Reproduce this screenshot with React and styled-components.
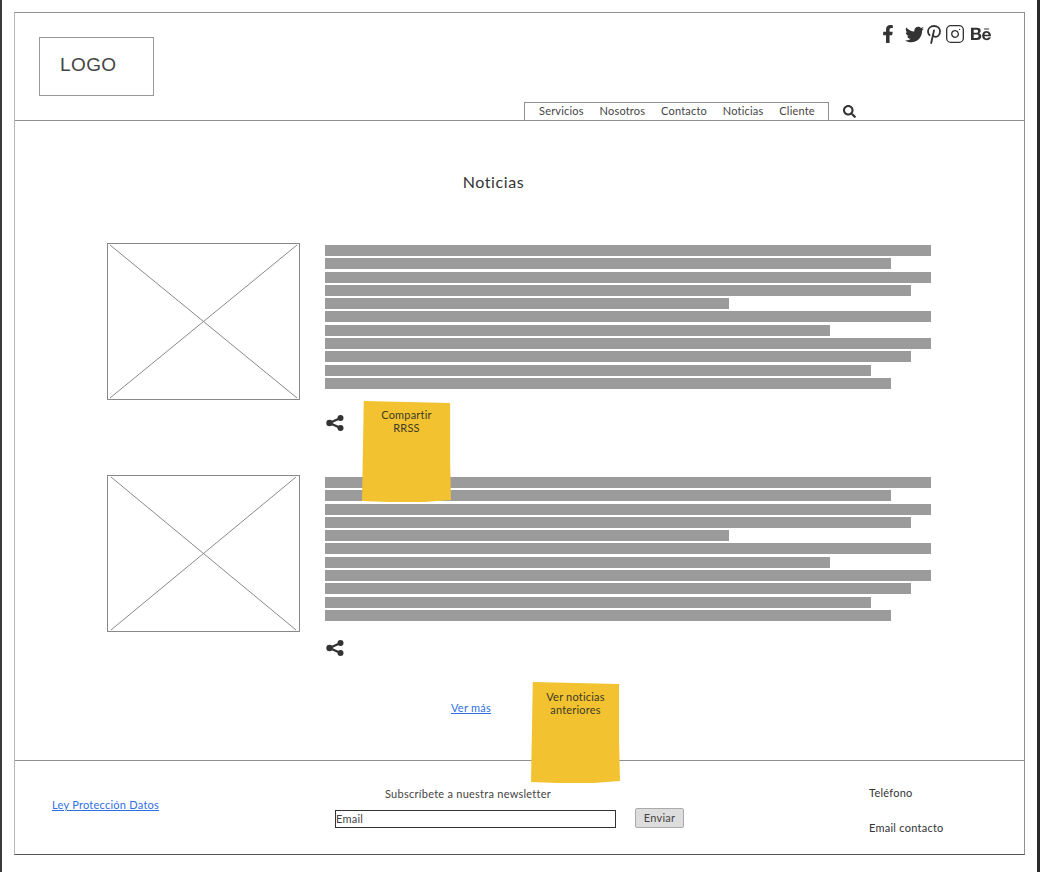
import React from 'react'
import styled, { createGlobalStyle } from 'styled-components'
import { FaFacebookF, FaTwitter, FaBehance, FaSearch } from 'react-icons/fa'
import { Instagram } from 'lucide-react'

const GlobalStyle = createGlobalStyle`
  html, body {
    margin: 0;
    background: #fff;
  }
  * {
    box-sizing: border-box;
  }
`

const Page = styled.div`
  width: 1040px;
  height: 872px;
  padding: 12px 12px 17px;
  border-left: 2px solid #3a3a3a;
  border-right: 3px solid #2a2a2a;
  background: #fff;
  color: #333;
  font-family: Lato, "Open Sans", sans-serif;
  overflow: hidden;
`

const Frame = styled.div`
  display: flex;
  flex-direction: column;
  height: 100%;
  border: 1px solid #8f8f8f;
  border-left: 1px solid #b5b5b5;
  border-bottom-color: #555;
`

const Header = styled.header`
  display: flex;
  justify-content: space-between;
  height: 108px;
  flex-shrink: 0;
  border-bottom: 1px solid #8f8f8f;
`

const Logo = styled.div`
  width: 115px;
  height: 59px;
  margin: 24px 0 0 24px;
  padding: 14px 0 0 20px;
  border: 1px solid #999;
  font-family: "Liberation Sans", sans-serif;
  font-size: 19px;
  line-height: 26px;
  letter-spacing: 0.4px;
  color: #444;
`

const HeaderRight = styled.div`
  display: flex;
  flex-direction: column;
  justify-content: space-between;
  width: 500px;
`

const Social = styled.div`
  display: flex;
  align-items: center;
  justify-content: flex-end;
  height: 22px;
  margin: 10px 33px 0 0;
  color: #333;
`

const SocialSlot = styled.span`
  display: flex;
  justify-content: center;
  width: ${({ $w }) => $w}px;
  margin-left: ${({ $gap }) => $gap}px;
`

const NavRow = styled.div`
  display: flex;
  align-items: center;
  gap: 14px;
  height: 18px;
`

const Nav = styled.nav`
  display: flex;
  align-items: center;
  gap: 15.8px;
  width: 305px;
  height: 18px;
  padding: 0 0 2px 14px;
  border: 1px solid #8f8f8f;
  border-bottom: none;
  font-size: 11px;
  letter-spacing: 0.2px;
  color: #444;
`

const Main = styled.main`
  display: flex;
  flex-direction: column;
  flex: 1;
  position: relative;
`

const Title = styled.h1`
  margin: 51px 0 0;
  padding-right: 52px;
  height: 71px;
  font-size: 16px;
  line-height: 20px;
  font-weight: 400;
  letter-spacing: 0.6px;
  text-align: center;
  color: #333;
`

const Article = styled.article`
  position: relative;
  display: grid;
  grid-template-columns: 193px 606px;
  column-gap: 25px;
  height: ${({ $h }) => $h}px;
  margin-left: 92px;
`

const Placeholder = styled.svg`
  display: block;
  width: 193px;
  height: 157px;
  border: 1px solid #888;
`

const Body = styled.div`
  display: flex;
  flex-direction: column;
  padding-top: 2px;
`

const Bars = styled.div`
  display: flex;
  flex-direction: column;
  gap: 2.3px;
`

const Bar = styled.div`
  height: 11px;
  background: #9b9b9b;
  width: ${({ $w }) => $w}px;
`

const Share = styled.svg`
  display: block;
  width: 18px;
  height: 16px;
  margin: ${({ $top }) => $top}px 0 0 1px;
  fill: #333;
  stroke: #333;
`

const Sticky = styled.div`
  position: absolute;
  z-index: 2;
  width: 89px;
  height: 101px;
  padding-top: ${({ $pad }) => $pad}px;
  background: #f2c230;
  clip-path: polygon(2% 0, 99% 2%, 99% 60%, 100% 98%, 70% 100%, 30% 100%, 0 99%, 1% 50%);
  font-size: 11px;
  line-height: 13px;
  letter-spacing: 0.2px;
  text-align: center;
  color: #3d3a25;
  left: ${({ $x }) => $x}px;
  top: ${({ $y }) => $y}px;
`

const MoreRow = styled.div`
  position: relative;
  height: 48px;
  padding: 14px 0 0 436px;
`

const BlueLink = styled.a`
  font-size: 11px;
  line-height: 14px;
  letter-spacing: 0.25px;
  color: #2e6fe6;
  text-decoration: underline;
  cursor: pointer;
`

const Footer = styled.footer`
  display: grid;
  grid-template-columns: 320px 534px 1fr;
  height: 94px;
  flex-shrink: 0;
  border-top: 1px solid #8f8f8f;
  font-size: 11px;
  letter-spacing: 0.25px;
`

const FooterLeft = styled.div`
  padding: 37px 0 0 37px;
`

const Newsletter = styled.div`
  display: flex;
  flex-direction: column;
  padding-top: 26px;
`

const NewsletterTitle = styled.div`
  margin-left: 50px;
  line-height: 14px;
  color: #444;
`

const Form = styled.form`
  display: flex;
  align-items: flex-start;
  gap: 19px;
  margin-top: 7px;
`

const EmailInput = styled.input`
  width: 281px;
  height: 18px;
  margin-top: 2px;
  padding: 0 0 2px;
  border: 1px solid #333;
  border-radius: 0;
  outline: none;
  background: #fff;
  font: inherit;
  letter-spacing: inherit;
  &::placeholder {
    color: #444;
    opacity: 1;
  }
`

const SendButton = styled.button`
  width: 49px;
  height: 20px;
  padding: 0 0 2px;
  border: 1px solid #aaa;
  border-radius: 2px;
  background: #ddd;
  font: inherit;
  letter-spacing: inherit;
  color: #444;
`

const Contact = styled.div`
  display: flex;
  flex-direction: column;
  gap: 21px;
  padding-top: 25px;
  line-height: 14px;
  color: #333;
`

const lines = [606, 566, 606, 586, 404, 606, 505, 606, 586, 546, 566]

function ShareIcon({ top }) {
  return (
    <Share $top={top} viewBox="0 0 18 16">
      <line x1="3.5" y1="8" x2="14.5" y2="3" strokeWidth="2.4" />
      <line x1="3.5" y1="8" x2="14.5" y2="13" strokeWidth="2.4" />
      <circle cx="3.5" cy="8" r="3.2" stroke="none" />
      <circle cx="14.5" cy="3" r="3" stroke="none" />
      <circle cx="14.5" cy="13" r="3" stroke="none" />
    </Share>
  )
}

function PinterestIcon() {
  return (
    <svg width="14" height="19" viewBox="0 0 14 19" fill="none" stroke="currentColor" strokeWidth="1.8" strokeLinecap="round">
      <path d="M2.6 10.2C1.4 9 1 7.8 1 6.5 1 3.3 3.6 1 7 1s6 2.2 6 5.2c0 3.2-2 5.6-4.6 5.6-1.2 0-2.1-.6-2.4-1.5" />
      <path d="M7 5.5 4.2 18" />
    </svg>
  )
}

function NewsItem({ height, inset, shareTop, children }) {
  return (
    <Article $h={height}>
      <Placeholder viewBox="0 0 193 157" preserveAspectRatio="none">
        <line x1={inset} y1="1" x2={193 - inset} y2="156" stroke="#888" strokeWidth="1" />
        <line x1={193 - inset} y1="1" x2={inset} y2="156" stroke="#888" strokeWidth="1" />
      </Placeholder>
      <Body>
        <Bars>
          {lines.map((w, i) => <Bar key={i} $w={w} />)}
        </Bars>
        <ShareIcon top={shareTop} />
      </Body>
      {children}
    </Article>
  )
}

function App() {
  return (
    <>
      <GlobalStyle />
      <Page>
        <Frame>
          <Header>
            <Logo>LOGO</Logo>
            <HeaderRight>
              <Social>
                <SocialSlot $w={12} $gap={0}><FaFacebookF size={18} /></SocialSlot>
                <SocialSlot $w={19} $gap={11}><FaTwitter size={19} /></SocialSlot>
                <SocialSlot $w={14} $gap={3}><PinterestIcon /></SocialSlot>
                <SocialSlot $w={20} $gap={4}><Instagram size={20} strokeWidth={1.6} /></SocialSlot>
                <SocialSlot $w={21} $gap={5}><FaBehance size={20} /></SocialSlot>
              </Social>
              <NavRow>
                <Nav>
                  <span>Servicios</span>
                  <span>Nosotros</span>
                  <span>Contacto</span>
                  <span>Noticias</span>
                  <span>Cliente</span>
                </Nav>
                <FaSearch size={13} />
              </NavRow>
            </HeaderRight>
          </Header>
          <Main>
            <Title>Noticias</Title>
            <NewsItem height={232} inset={2} shareTop={26}>
              <Sticky $x={255} $y={158} $pad={7}>Compartir<br />RRSS</Sticky>
            </NewsItem>
            <NewsItem height={207} inset={3} shareTop={19} />
            <MoreRow>
              <BlueLink>Ver más</BlueLink>
              <Sticky $x={516} $y={0} $pad={8}>Ver noticias<br />anteriores</Sticky>
            </MoreRow>
          </Main>
          <Footer>
            <FooterLeft><BlueLink>Ley Protección Datos</BlueLink></FooterLeft>
            <Newsletter>
              <NewsletterTitle>Subscríbete a nuestra newsletter</NewsletterTitle>
              <Form>
                <EmailInput placeholder="Email" />
                <SendButton type="button">Enviar</SendButton>
              </Form>
            </Newsletter>
            <Contact>
              <span>Teléfono</span>
              <span>Email contacto</span>
            </Contact>
          </Footer>
        </Frame>
      </Page>
    </>
  )
}

export default App
